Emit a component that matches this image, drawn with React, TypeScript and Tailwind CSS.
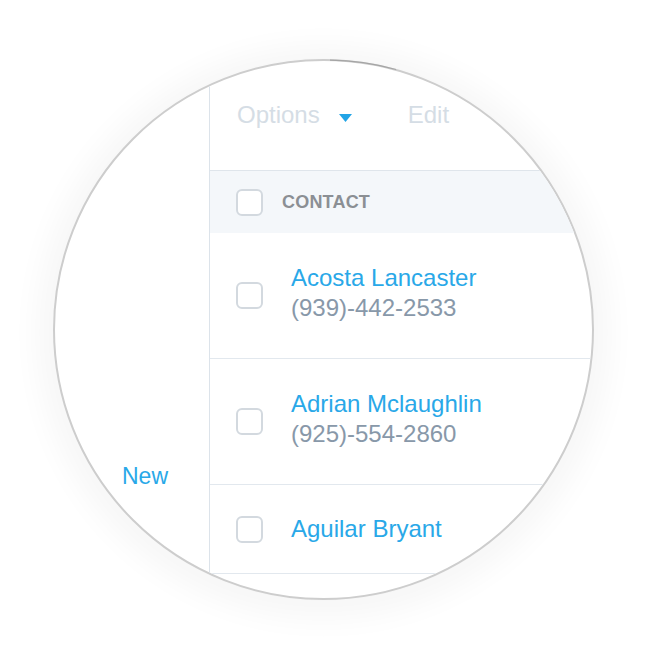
import React from "react";

const font = { fontFamily: '"Liberation Sans", Arial, sans-serif' };

function Box() {
  return <div className="w-[27px] h-[27px] shrink-0 rounded-[6px] border-2 border-[#d3d9df] bg-white" />;
}

function Row({ name, phone, h }: { name: string; phone?: string; h: string }) {
  return (
    <div className={`${h} flex items-center pl-[26px] border-b border-[#e2e8ee]`}>
      <Box />
      <div className={`ml-[28px] flex flex-col ${phone ? "pb-[6px]" : ""}`}>
        <div className="text-[24px] leading-[30px] text-[#29a8e8] whitespace-nowrap">{name}</div>
        {phone && <div className="text-[24px] leading-[30px] text-[#8898a9] whitespace-nowrap">{phone}</div>}
      </div>
    </div>
  );
}

export default function App() {
  return (
    <div className="relative w-[651px] h-[654px] bg-white pt-[59px] pl-[53px]" style={font}>
      <div className="w-[541px] h-[541px] rounded-full border-2 border-[#cdcdcd] overflow-hidden flex bg-white shadow-[0_3px_30px_16px_rgba(0,0,0,0.035)]">
        <div className="w-[154px] shrink-0 pt-[400px] pl-[67px]">
          <div className="text-[23px] leading-[30px] text-[#29a8e8]">New</div>
        </div>
        <div className="flex-1 border-l border-[#dce3ea] flex flex-col min-w-0">
          <div className="h-[110px] shrink-0 border-b border-[#dfe5eb] pl-[27px] pt-[39px] flex items-start">
            <span className="text-[24px] leading-[30px] text-[#d5dde5]">Options</span>
            <svg className="ml-[19px] mt-[14px]" width="13" height="8" viewBox="0 0 13 8">
              <path d="M0 0 H13 L6.5 8 Z" fill="#22a4e6" />
            </svg>
            <span className="ml-[56px] text-[24px] leading-[30px] text-[#d5dde5]">Edit</span>
          </div>
          <div className="h-[62px] shrink-0 bg-[#f4f7fa] flex items-center pl-[26px]">
            <Box />
            <span className="ml-[19px] text-[18px] font-bold text-[#8b8f94] tracking-[0.2px]">CONTACT</span>
          </div>
          <Row h="h-[126px] shrink-0" name="Acosta Lancaster" phone="(939)-442-2533" />
          <Row h="h-[126px] shrink-0" name="Adrian Mclaughlin" phone="(925)-554-2860" />
          <Row h="h-[89px] shrink-0" name="Aguilar Bryant" />
          <div className="flex-1" />
        </div>
      </div>
      <svg className="absolute left-0 top-0 pointer-events-none" width="651" height="654">
        <path d="M 330 60.2 A 269.5 269.5 0 0 1 396 69.5" fill="none" stroke="#8a8a8a" strokeWidth="1.2" opacity="0.6" />
      </svg>
    </div>
  );
}
